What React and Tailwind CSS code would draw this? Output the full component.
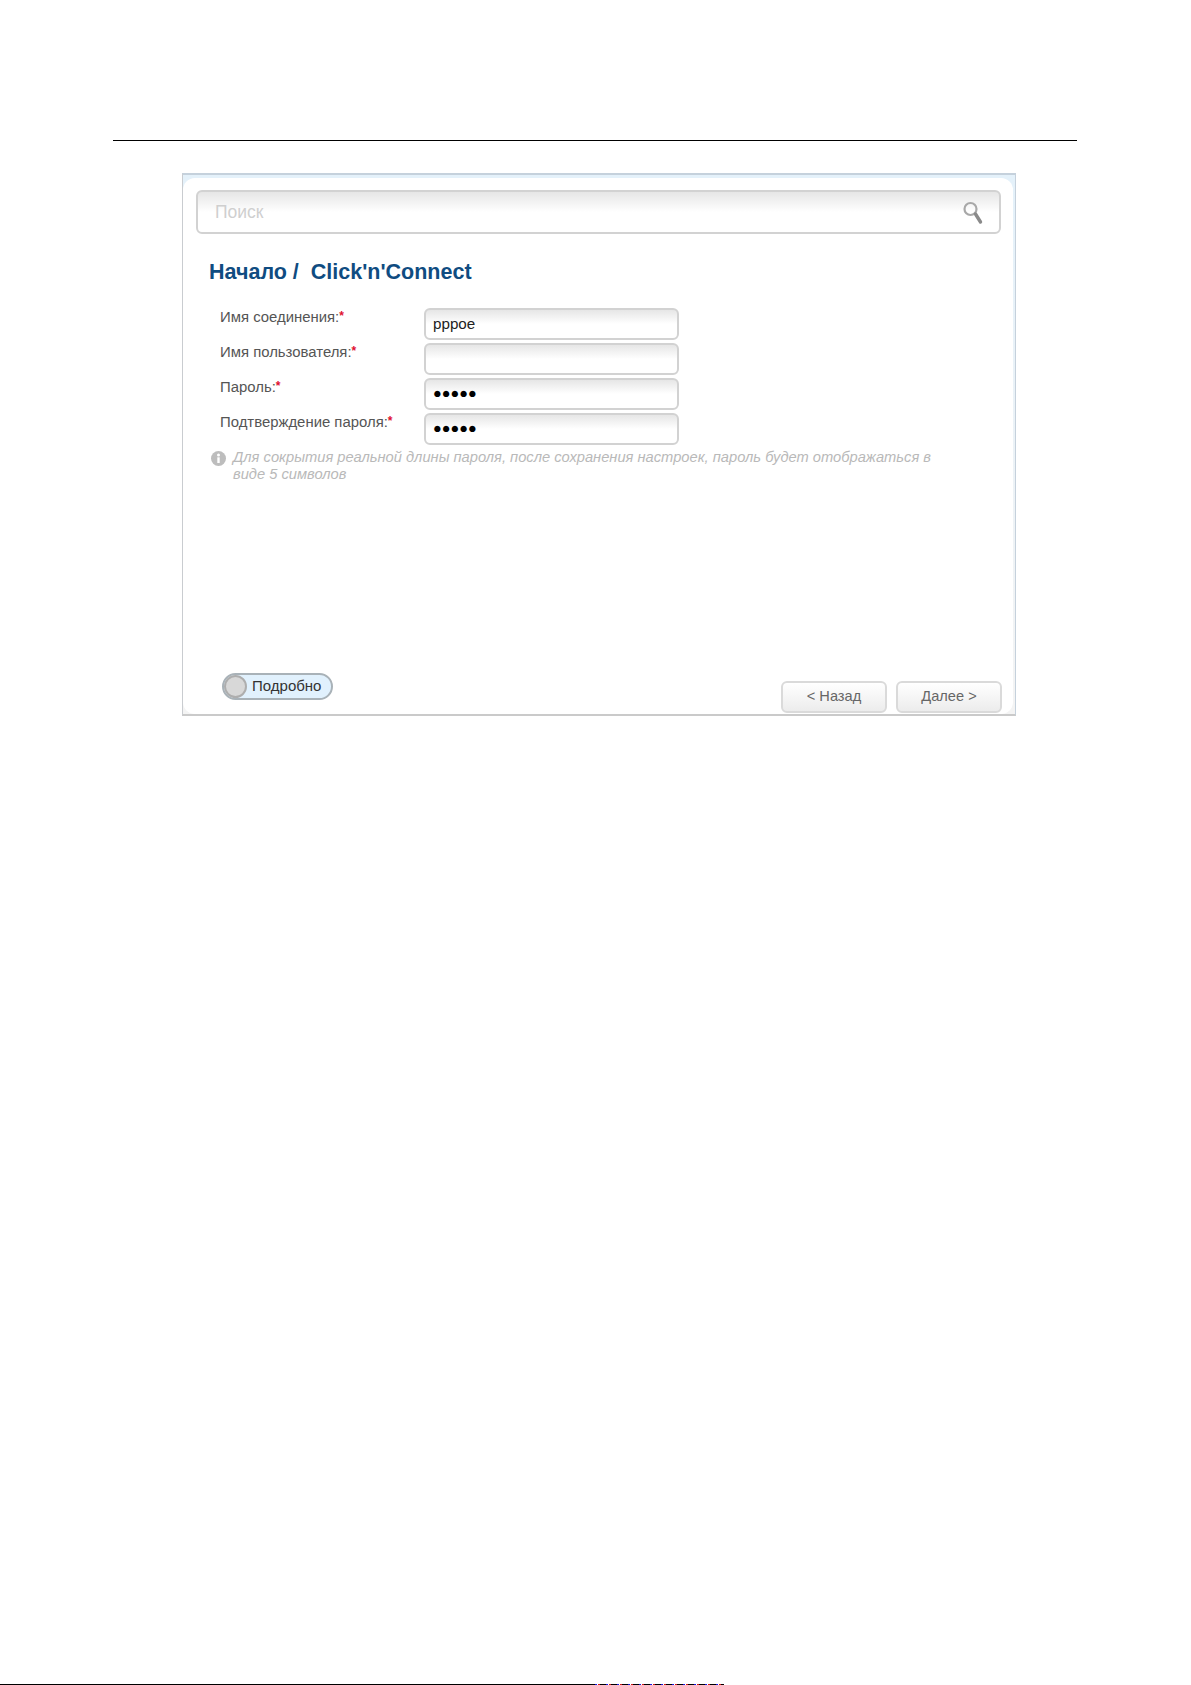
const font = { fontFamily: '"Liberation Sans", Arial, sans-serif' };

function Row({ label, children }) {
  return (
    <div className="flex items-start h-[35px]">
      <div className="w-[216px] pl-[12px] pt-[1px] text-[14.9px] leading-[14px] text-[#555] whitespace-nowrap">
        {label}:<span className="text-[12px] font-bold align-[2px] text-[#e0102f]">*</span>
      </div>
      <div className="w-[255px] h-[32px] flex items-center pl-[7px] rounded-[6px] border-2 border-[#d2d2d2] bg-gradient-to-b from-[#e6e6e6] via-white to-white text-[15.2px] text-[#222]">
        {children}
      </div>
    </div>
  );
}

function Dots() {
  return <span className="text-black text-[14.5px] mt-[-1px]">●●●●●</span>;
}

const btn = "w-[106px] h-[32px] rounded-[6px] border-2 border-[#dadada] bg-gradient-to-b from-white to-[#ececec] text-[14.6px] text-[#666]";

export default function App() {
  return (
    <div className="relative w-[1191px] h-[1685px] bg-white overflow-hidden" style={font}>
      <div className="pt-[140px] pl-[113px]">
        <div className="h-[1px] bg-black w-[964px]" />
      </div>
      <div className="ml-[182px] mt-[32px] w-[834px] h-[543px] border border-[#c5d1dc] border-t-2 border-l-[#c9ccd0] border-b-2 border-b-[#cacaca] bg-gradient-to-b from-[#e4f1fa] to-[#f4f4f4] pt-[3px] pr-[2px]">
        <div className="h-full flex flex-col bg-white rounded-[12px] pl-[13px] pr-[12px] pt-[12px]">
          <div className="h-[44px] shrink-0 flex items-center justify-between rounded-[6px] border-2 border-[#d2d2d2] bg-gradient-to-b from-[#e6e6e6] via-white to-white pl-[17px] pr-[16px]">
            <span className="text-[17.5px] text-[#cfcfcf] mt-[1px]">Поиск</span>
            <svg className="mt-[1px]" width="21" height="24" viewBox="0 0 21 24" fill="none">
              <circle cx="8.5" cy="8" r="6" stroke="#a8a8a8" strokeWidth="2.2" />
              <path d="M13.5 13 L18.5 21" stroke="#8a8a8a" strokeWidth="3.4" strokeLinecap="round" />
            </svg>
          </div>
          <h1 className="mt-[23px] ml-[13px] text-[21.5px] leading-[30px] font-bold text-[#0f4c81] whitespace-pre">Начало /  Click'n'Connect</h1>
          <div className="mt-[21px] ml-[12px]">
            <Row label="Имя соединения"><span>pppoe</span></Row>
            <Row label="Имя пользователя"></Row>
            <Row label="Пароль"><Dots /></Row>
            <Row label="Подтверждение пароля"><Dots /></Row>
          </div>
          <div className="flex items-start ml-[15px] mt-[-1px]">
            <svg className="mt-[4px] shrink-0" width="15" height="15" viewBox="0 0 15 15">
              <circle cx="7.5" cy="7.5" r="7.5" fill="#bdbdbd" />
              <rect x="6.3" y="6.3" width="2.4" height="5.7" fill="#fff" />
              <circle cx="7.5" cy="4" r="1.5" fill="#fff" />
            </svg>
            <p className="ml-[7px] mt-[2px] w-[720px] text-[14.7px] leading-[17px] italic text-[#b9b9b9]">
              Для сокрытия реальной длины пароля, после сохранения настроек, пароль будет отображаться в виде 5 символов
            </p>
          </div>
          <div className="mt-auto flex items-end justify-between pb-[1px] mr-[-1px]">
            <div className="ml-[26px] mb-[13px] w-[111px] h-[27px] flex items-center rounded-full border-2 border-[#a9b2b8] bg-[#e1f1fd]">
              <span className="w-[23px] h-[23px] rounded-full bg-[#d8d8d8] border-2 border-[#aeaeae]" />
              <span className="ml-[5px] text-[15px] text-[#333]">Подробно</span>
            </div>
            <div className="flex gap-[9px]">
              <button className={btn}>&lt; Назад</button>
              <button className={btn}>Далее &gt;</button>
            </div>
          </div>
        </div>
      </div>
      <div className="absolute left-0 bottom-0 h-[1px] flex">
        <div className="w-[592px] bg-black" />
        <div className="w-[132px] bg-[repeating-linear-gradient(90deg,#000_0px,#000_3px,#1818e0_3px,#1818e0_5px,#fff_5px,#fff_6px,#d01818_6px,#d01818_8px,#000_8px,#000_11px)]" />
      </div>
    </div>
  );
}
